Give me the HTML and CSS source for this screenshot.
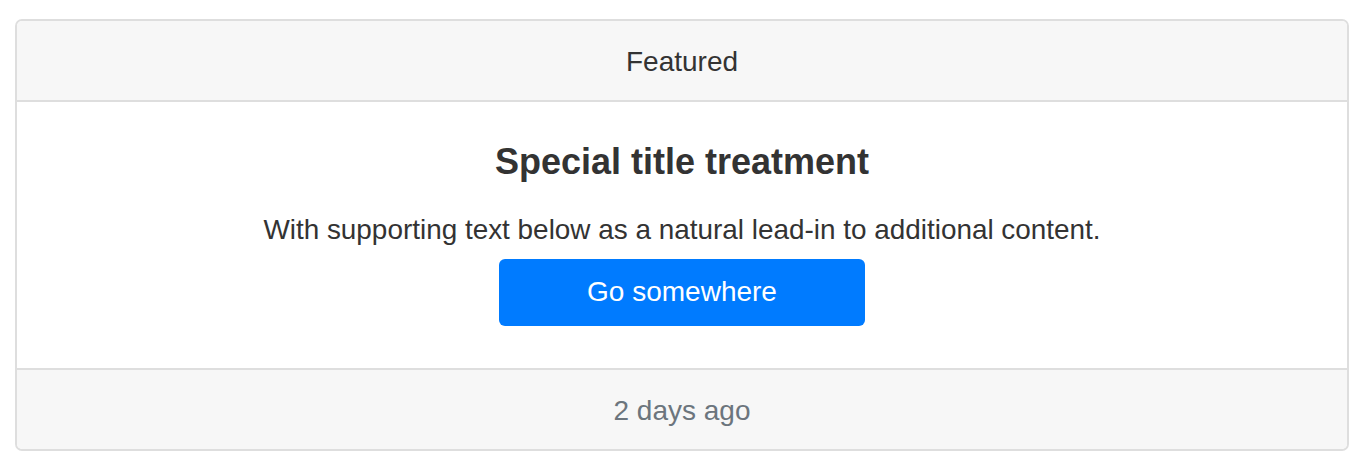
FILE: index.html
```html
<!DOCTYPE html>
<html lang="en">
<head>
<meta charset="utf-8">
<title>Card</title>
<link rel="stylesheet" href="styles.css">
</head>
<body>
<div class="card">
  <div class="card-header">Featured</div>
  <div class="card-body">
    <h5 class="card-title">Special title treatment</h5>
    <p class="card-text">With supporting text below as a natural lead-in to additional content.</p>
    <a href="#" class="btn">Go somewhere</a>
  </div>
  <div class="card-footer">2 days ago</div>
</div>
</body>
</html>
```
FILE: styles.css
```css
html, body {
  background: #ffffff;
}
body {
  margin: 19px 21px 0 15px;
  font-family: "Liberation Sans", Arial, Helvetica, sans-serif;
  font-size: 28px;
  line-height: 42px;
  color: #333333;
}
.card {
  border: 2px solid #dedede;
  border-radius: 7px;
  overflow: hidden;
  text-align: center;
  background: #ffffff;
}
.card-header {
  background: #f7f7f7;
  border-bottom: 2px solid #dedede;
  padding: 20px 34px 17px;
}
.card-body {
  padding: 37.5px 34px 42px;
}
.card-title {
  margin: 0 0 26.6px;
  font-size: 36px;
  line-height: 43.2px;
  font-weight: bold;
  color: #333333;
}
.card-text {
  margin: 0 0 7.7px;
  font-size: 27.9px;
}
.btn {
  display: inline-block;
  width: 366px;
  box-sizing: border-box;
  padding: 12px 0 13px;
  background: #007bff;
  color: #ffffff;
  text-decoration: none;
  border-radius: 6px;
  line-height: 42px;
}
.card-footer {
  background: #f7f7f7;
  border-top: 2px solid #dedede;
  padding: 20px 34px 17px;
  color: #6c757d;
}
```
